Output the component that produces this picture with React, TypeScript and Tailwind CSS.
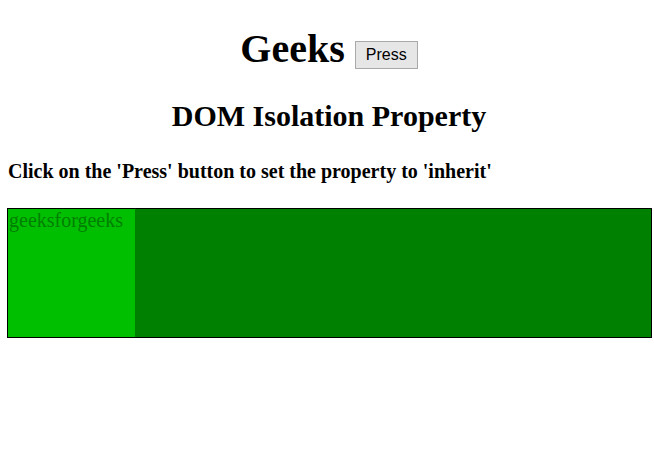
export default function App() {
  return (
    <div className="min-h-[462px] bg-white text-black font-['Liberation_Serif',serif]">
      <div className="flex items-end justify-center gap-[10px] pl-[4px] pt-[25px]">
        <h1 className="text-[40px] font-bold leading-[48px]">Geeks</h1>
        <button className="mb-[4px] h-[28px] w-[63px] border border-[#a9a9a9] bg-[#e6e6e6] font-['Liberation_Sans',sans-serif] text-[16px] text-black">
          Press
        </button>
      </div>
      <h2 className="mt-[25px] pl-[4px] text-center text-[30px] font-bold leading-[36px]">
        DOM Isolation Property
      </h2>
      <h3 className="mt-[25px] pl-[8px] text-[20px] font-bold leading-[24px]">
        Click on the 'Press' button to set the property to 'inherit'
      </h3>
      <div className="ml-[7px] mt-[25px] flex h-[130px] w-[645px] border border-black bg-[#008000]">
        <div className="h-full w-[127px] bg-[#00bf00] pl-[1px] text-[20px] leading-[22px] text-[#008000]">
          geeksforgeeks
        </div>
      </div>
    </div>
  );
}
